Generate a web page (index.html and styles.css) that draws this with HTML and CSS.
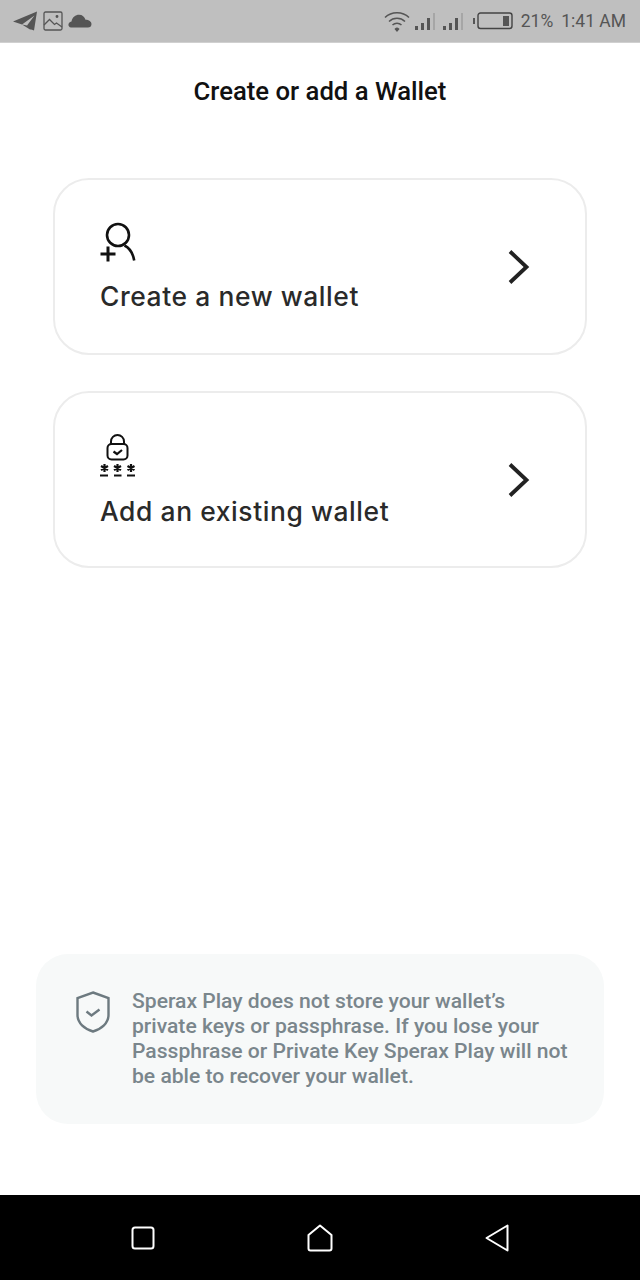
FILE: index.html
```html
<!DOCTYPE html>
<html>
  <head>
    <title>Create or add a Wallet</title>
    <link rel="stylesheet" href="styles.css">
  </head>
  <body>
    <div class="statusbar">
      <div class="status-left">
        <svg width="26" height="22" viewBox="0 0 26 22"><path d="M1 11.500L25 1.500 22 20.500 18 19 15 15.500 22.500 5.500 10 14.500z" fill="#555"/><path d="M10 14.500l5 1 5 3.500-2 .5z" fill="#555"/></svg>
        <svg width="20" height="20" viewBox="0 0 20 20" fill="none" stroke="#555" stroke-width="1.300"><rect x="1" y="1" width="18" height="18" rx="1.500"/><path d="M1 14l5.500-5.500 5 5 2-1.500 5.500 4"/><circle cx="14" cy="5.500" r=".8" fill="#555"/></svg>
        <svg width="24" height="14" viewBox="0 0 24 14"><path d="M3 13.500C-.5 13.500-.5 8 3.500 7.500 4.500 3 7.500.8 11 .8c3.500 0 5.500 2 6.500 5 3.500 0 6 2 6 4.200 0 2.500-1.500 3.500-3.500 3.500z" fill="#555"/></svg>
      </div>
      <div class="status-right">
        <svg class="wifi" width="26" height="22" viewBox="0 0 26 22" fill="none" stroke="#555" stroke-width="1.500"><path d="M1 7.500C7.500 1 18.500 1 25 7.500"/><path d="M5 11.500c4.500-4.300 11.500-4.300 16 0"/><path d="M8.500 15c2.500-2.300 6.500-2.300 9 0"/><path d="M11.500 19l1.500 1.800 1.500-1.800c-.8-.8-2.200-.8-3 0z" fill="#555"/></svg>
        <svg class="signal" width="22" height="20" viewBox="0 0 22 20"><path d="M1 15h3v4H1zM7 12h3v7H7zM13 7h3v12h-3z" fill="#555"/><path d="M19 2h2v17h-2z" fill="#a6a6a6"/></svg>
        <svg class="signal" width="22" height="20" viewBox="0 0 22 20"><path d="M1 15h3v4H1zM7 12h3v7H7zM13 7h3v12h-3z" fill="#555"/><path d="M19 2h2v17h-2z" fill="#a6a6a6"/></svg>
        <svg class="battery" width="40" height="18" viewBox="0 0 40 18" fill="none"><path d="M1 6v6" stroke="#555" stroke-width="2"/><rect x="5" y="1" width="34" height="15.500" rx="2.500" stroke="#444" stroke-width="1.400"/><rect x="30" y="4" width="6" height="10" fill="#555"/></svg>
        <span class="battery-text">21%</span>
        <span class="clock">1:41 AM</span>
      </div>
    </div>

    <div class="content">
      <h1 class="title">Create or add a Wallet</h1>

      <div class="cards">
        <div class="card">
          <div class="card-body">
            <svg class="card-icon" width="38" height="42" viewBox="0 0 38 42" fill="none" stroke="#111" stroke-width="2.600"><circle cx="18" cy="13" r="11"/><path d="M24.500 23.500c5 2.500 8.500 8 9.700 15"/><path d="M.5 32h15M8 24.500v15" stroke-width="3"/></svg>
            <p class="card-label">Create a new wallet</p>
          </div>
          <svg class="chevron" width="24" height="38" viewBox="0 0 24 38" fill="none" stroke="#222" stroke-width="3.800"><path d="M3 3.500L19.500 19 3 34.500"/></svg>
        </div>

        <div class="card">
          <div class="card-body">
            <svg class="card-icon" width="38" height="46" viewBox="0 0 38 46" fill="none" stroke="#111" stroke-width="2"><path d="M11 11V8.500a6.500 6.500 0 0 1 13 0V11"/><rect x="7.500" y="11" width="20" height="15.500" rx="4"/><path d="M13.500 18.500l3.500 2.500 5-4" stroke-width="2.200"/><path d="M0 42.500h8M14 42.500h7.500M27 42.500h8" stroke-width="2"/><path d="M4.500 31v8M1 33l7 4M8 33l-7 4M17.500 31v8M14 33l7 4M21 33l-7 4M31 31v8M27.500 33l7 4M34.500 33l-7 4" stroke-width="2.200"/></svg>
            <p class="card-label">Add an existing wallet</p>
          </div>
          <svg class="chevron" width="24" height="38" viewBox="0 0 24 38" fill="none" stroke="#222" stroke-width="3.800"><path d="M3 3.500L19.500 19 3 34.500"/></svg>
        </div>
      </div>

      <div class="note">
        <svg class="note-icon" width="34" height="42" viewBox="0 0 34 42" fill="none" stroke="#6d7a80" stroke-width="2.400"><path d="M17 1.500L32.500 7v17c0 8-7 14-15.500 16.500C8.500 38 1.500 32 1.500 24V7z"/><path d="M10.500 20.500l5 4 8-6"/></svg>
        <p class="note-text">Sperax Play does not store your wallet’s private keys or passphrase. If you lose your Passphrase or Private Key Sperax Play will not be able to recover your wallet.</p>
      </div>
    </div>

    <div class="navbar">
      <svg width="24" height="24" viewBox="0 0 24 24" fill="none" stroke="#fff" stroke-width="2"><rect x="1.500" y="1.500" width="21" height="21" rx="2.500"/></svg>
      <svg width="26" height="28" viewBox="0 0 26 28" fill="none" stroke="#fff" stroke-width="2" stroke-linejoin="round"><path d="M13 1.500L24.500 11v13.500q0 2-2 2h-19q-2 0-2-2V11z"/></svg>
      <svg width="24" height="28" viewBox="0 0 24 28" fill="none" stroke="#fff" stroke-width="2" stroke-linejoin="round"><path d="M22.500 1.500v25L1.500 14z"/></svg>
    </div>
  </body>
</html>
```

FILE: styles.css
```css
html,
body {
  margin: 0;
  padding: 0;
}
body {
  width: 640px;
  height: 1280px;
  display: flex;
  flex-direction: column;
  background: #fff;
  font-family: Roboto, sans-serif;
  overflow: hidden;
}
.statusbar {
  height: 42px;
  flex: none;
  background: #bfbfbf;
  display: flex;
  justify-content: space-between;
  align-items: center;
  padding: 0 14px 0 12px;
  border-bottom: 1px solid #d0d0d0;
}
.status-left {
  display: flex;
  align-items: center;
  gap: 5px;
}
.status-right {
  display: flex;
  align-items: center;
  color: #555;
  font-size: 17.500px;
}
.wifi {
  margin-right: 4px;
}
.signal {
  margin-right: 6px;
}
.signal + .signal {
  margin-right: 9px;
}
.battery {
  margin: 0 8px 0 0;
}
.clock {
  margin-left: 8px;
}
.content {
  flex: 1;
  display: flex;
  flex-direction: column;
}
.title {
  margin: 31px 0 0;
  font-size: 25.700px;
  line-height: 35px;
  font-weight: 500;
  text-align: center;
  color: #111;
}
.cards {
  margin: 69px 53px 0 53px;
  display: flex;
  flex-direction: column;
  gap: 36px;
}
.card {
  height: 177px;
  box-sizing: border-box;
  border: 2px solid #ececec;
  border-radius: 36px;
  display: flex;
  justify-content: space-between;
  align-items: center;
  padding: 0 54px 0 45px;
}
.card-icon {
  display: block;
}
.card-label {
  margin: 16px 0 0;
  font-family: Inter, sans-serif;
  font-size: 26.400px;
  font-weight: 450;
  line-height: 32px;
  letter-spacing: 0.6px;
  color: #2a2a2a;
}
.chevron {
  flex: none;
}
.note {
  margin: auto 36px 71px;
  height: 170px;
  box-sizing: border-box;
  background: #f7f9f9;
  border-radius: 32px;
  display: flex;
  align-items: flex-start;
  gap: 22px;
  padding: 34px 0 0 40px;
}
.note-icon {
  flex: none;
  margin-top: 3px;
}
.note-text {
  margin: 0;
  width: 440px;
  font-size: 21.100px;
  font-weight: 500;
  line-height: 25px;
  color: #7a868c;
}
.navbar {
  height: 85px;
  flex: none;
  background: #000;
  display: flex;
  align-items: center;
  justify-content: space-between;
  padding: 0 131px;
  box-sizing: border-box;
}
```
